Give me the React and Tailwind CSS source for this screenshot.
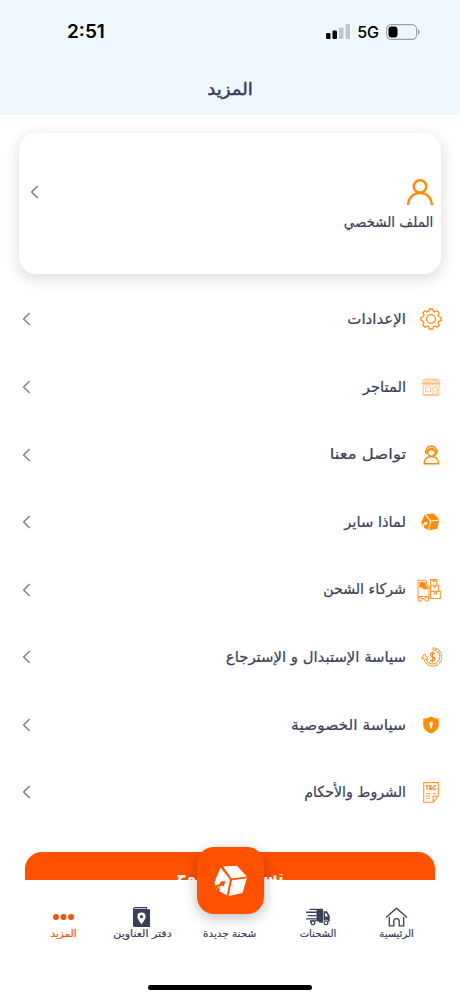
import React from 'react';

function Chevron() {
  return (
    <svg className="h-[14px] w-[9px]" viewBox="0 0 9 14" fill="none" stroke="#858585" strokeWidth="1.6">
      <path d="M7.7 1 1.7 7l6 6" />
    </svg>
  );
}

function CubeIcon({ className, arrow }) {
  return (
    <svg className={className} viewBox="0 0 34 32" fill="currentColor">
      <path d="M9 1.5 23 .8l9.8 10.7-15.3 2z" />
      <path d="M18 15.3 32.8 13.3 28.5 28 14.5 31z" />
      <path d="M6.5 2.5 16 14.5 12.8 30.3 2 24.5.5 17z" />
      <path d="M0 23.5C1.5 20.5 4 19 6.8 18.5L5.3 17l6-1.300-1.500 6-1.200-1.500C6 21.200 5.200 22.500 5 24.500l1.800-.800-3.300 4L0 26z" fill={arrow} />
      <path d="M2.2 24.8 3.6 22 6 20.6 4.2 23z" />
    </svg>
  );
}

function GearIcon() {
  return (
    <svg className="h-[22px] w-[22px]" viewBox="0 0 22 22" fill="none" stroke="#ff8c05" strokeWidth="1.3" strokeLinejoin="round">
      <path d="M9.400 1h3.200c.3 0 .4 1.900.8 2.300.5.400 1.200.7 1.700.600.5 0 1.700-1.300 2-1.100l2.100 2.100c.2.300-1.100 1.500-1.100 2s.2 1.200.6 1.700c.4.400 2.300.500 2.300.800v3.200c0 .3-1.900.4-2.300.8-.4.500-.7 1.200-.6 1.700 0 .5 1.300 1.700 1.100 2l-2.100 2.100c-.3.200-1.500-1.100-2-1.100s-1.200.2-1.700.6c-.4.400-.5 2.300-.8 2.300H9.400c-.3 0-.4-1.900-.8-2.300-.5-.4-1.200-.7-1.700-.6-.5 0-1.700 1.300-2 1.100l-2.100-2.100c-.2-.3 1.100-1.500 1.100-2s-.2-1.200-.6-1.700C2.900 13 1 12.900 1 12.600V9.400c0-.3 1.900-.4 2.300-.8.4-.5.7-1.200.6-1.700 0-.5-1.300-1.700-1.100-2l2.100-2.100c.3-.2 1.500 1.100 2 1.100s1.200-.2 1.700-.6c.4-.4.5-2.300.8-2.300z" />
      <circle cx="11" cy="11" r="4.4" />
    </svg>
  );
}

function StoreIcon() {
  return (
    <svg className="h-[18px] w-5" viewBox="0 0 20 18" fill="none" stroke="#ffb062" strokeWidth=".8">
      <path d="M3.2 1h13.6M3 1 1 5.5h18L17 1M6.5 1 5.4 5.500M10 1v4.500M13.500 1l1.100 4.500M4.700 1 3.200 5.500M8.200 1 7.600 5.500M11.800 1l.6 4.500M15.300 1l1.500 4.500" />
      <path d="M1 5.500a1.800 1.800 0 0 0 3.600 0 1.800 1.800 0 0 0 3.600 0 1.800 1.800 0 0 0 3.600 0 1.800 1.800 0 0 0 3.600 0 1.800 1.800 0 0 0 3.600 0" />
      <path d="M2.200 7.500v9.300h15.600V7.500M1.400 17.200h17.200M4.600 9.200h5.200v4.600H4.600zM12 16.800V9.200h4v7.600M13.200 12.500v1.200" />
    </svg>
  );
}

function SupportIcon() {
  return (
    <svg className="h-5 w-[17px]" viewBox="0 0 17 19" fill="none" stroke="#ff8c05" strokeWidth="1.4">
      <path d="M1.100 18.200c0-4.600 3-7.200 7.200-7.200s7.200 2.600 7.200 7.200z" />
      <path d="M3.300 5.600C3.300 2.200 5.600.700 8.300.700s5 1.500 5 4.900" />
      <circle cx="8.300" cy="6.800" r="3.900" />
      <path d="M4.800 5.200c2.400 0 3-1.600 3.800-1.600s1.400 1.600 3.400 1.600M13 8c0 1.400-1.400 2.100-3.200 2.100" />
      <path d="M2.900 4.800v3.400M13.700 4.800v3.400" strokeWidth="2" />
    </svg>
  );
}

function ForkliftIcon() {
  return (
    <svg className="relative -left-[2px] h-6 w-6" viewBox="0 0 24 24" fill="none" stroke="#ff9a2e" strokeWidth="1.1">
      <path d="M1 20.500V2.300h7.600l3.400 8v10.200H9M3.500 20.500H7M12 18.500H1.800" />
      <path d="M2.600 4.200h5.200L10.600 11H6.400L4.800 9.200H2.600z" fill="#ff8c05" stroke="#ff8c05" strokeWidth=".5" />
      <circle cx="3.200" cy="21.400" r="1.900" fill="white" />
      <circle cx="9.700" cy="21.400" r="1.900" fill="white" />
      <path d="M13.600.800v19.700h9.700v-7.100h-9M14 13.400h7.400V7.200H14M14 1.600h5.800v5.600M16.200 1.600v1.800h1.600V1.600M17 7.200v2h1.800v-2M17.300 13.400v2.200h2.200v-2.200M12.300 20.500h1.300" />
    </svg>
  );
}

function RefundIcon() {
  return (
    <svg className="h-5 w-[21px]" viewBox="0 0 21 20" fill="none" stroke="#ff9124" strokeWidth="1">
      <path d="M12 .800a9.200 9.200 0 1 1-9.200 10.800H.8L3.500 7l3.200 4.600H5A7 7 0 1 0 12 3z" />
      <path d="M13.700 6.700c-.7-.6-1.300-.8-2.200-.8-2.800 0-2.800 3.600 0 3.900 3 .3 3.200 4.300.1 4.300-1.100 0-1.900-.3-2.500-1M11.500 4.500v11" strokeWidth="1.2" />
      <path d="m14.300 3.300 1-1.500m2 4 1.600-1M19 9l1.400-.3" />
    </svg>
  );
}

function ShieldIcon() {
  return (
    <svg className="h-[18px] w-4" viewBox="0 0 16 18">
      <path d="M8 .500c2.200 1.300 4.700 2 7.700 2.100v6.200c0 4.300-3.200 7-7.700 8.800C3.500 15.800.300 13.100.300 8.800V2.600C3.300 2.500 5.800 1.800 8 .500z" fill="#ff8c05" />
      <circle cx="8" cy="7.7" r="1.9" fill="white" />
      <path d="M7.300 8.500h1.400l.3 3.900H7z" fill="white" />
    </svg>
  );
}

function TermsIcon() {
  return (
    <svg className="h-[21px] w-4" viewBox="0 0 16 21" fill="none" stroke="#ff9a2e" strokeWidth="1.1">
      <path d="M.700.600h14.600v13.300l-5.200 6.300H.700zM10.100 20v-5.700h5" />
      <path d="M3 11.700h5.500M3 14h4.500M3 16.300h4M10 11.700h3" strokeWidth=".9" />
      <text x="8" y="8" textAnchor="middle" fontSize="6" fontWeight="800" fontFamily="Open Sans, sans-serif" fill="#ff8c05" stroke="none" textLength="11" lengthAdjust="spacingAndGlyphs">T&amp;C</text>
    </svg>
  );
}

const menuItems = [
  { label: 'الإعدادات', icon: <GearIcon />, scale: '' },
  { label: 'المتاجر', icon: <StoreIcon />, scale: 'scale-x-[0.98]' },
  { label: 'تواصل معنا', icon: <SupportIcon />, scale: 'scale-x-[1.1]' },
  { label: 'لماذا ساير', icon: <CubeIcon className="relative -left-px h-[18px] w-[19px] text-[#ff8c05]" arrow="white" />, scale: 'scale-x-[0.98]' },
  { label: 'شركاء الشحن', icon: <ForkliftIcon />, scale: 'scale-x-[0.945]' },
  { label: 'سياسة الإستبدال و الإسترجاع', icon: <RefundIcon />, scale: 'scale-x-[0.99]' },
  { label: 'سياسة الخصوصية', icon: <ShieldIcon />, scale: 'scale-x-[1.03]' },
  { label: 'الشروط والأحكام', icon: <TermsIcon />, scale: 'scale-x-[0.945]' },
];

function StatusBar() {
  return (
    <div dir="ltr" className="flex h-[64px] items-center justify-between pl-[67px] pr-10 font-['Inter'] text-black">
      <span className="pt-px text-[19px] font-semibold">2:51</span>
      <div className="flex items-center">
        <svg className="h-4 w-6" viewBox="0 0 24 16">
          <rect x="0" y="9" width="4.5" height="6" rx="1.3" />
          <rect x="6.5" y="6.5" width="4.5" height="8.5" rx="1.3" />
          <rect x="13" y="3.5" width="4.5" height="11.5" rx="1.3" fill="#bfc6cd" />
          <rect x="19.5" y="0" width="4.5" height="15" rx="1.3" fill="#bfc6cd" />
        </svg>
        <span className="mx-[7px] text-[16px] font-medium">5G</span>
        <svg className="h-4 w-[34px]" viewBox="0 0 34 16">
          <rect x=".6" y=".6" width="30" height="14.8" rx="4.6" fill="none" stroke="#9ba0a5" strokeWidth="1.1" />
          <rect x="2.5" y="2.5" width="9" height="11" rx="3" />
          <path d="M32 5.500c2.200.900 2.200 4.100 0 5z" fill="#9ba0a5" />
        </svg>
      </div>
    </div>
  );
}

function BottomNav() {
  return (
    <nav className="relative h-[119px] bg-white px-[25px]">
      <div className="grid grid-cols-[77px_80px_96px_80px_77px] text-center text-[10px] leading-[14px] text-[#3b4058] [-webkit-text-stroke:0.2px]">
        <div className="flex flex-col items-center pt-[27px]">
          <svg className="h-5 w-[23px]" viewBox="0 0 23 20" fill="none" stroke="currentColor" strokeWidth="1.3">
            <path d="M1 10.500 11.500 1.200 22 10.500M4.300 10v8.800h4.500v-4.500a2.700 2.700 0 0 1 5.400 0v4.500h4.500V10" />
          </svg>
          <span className="whitespace-nowrap">الرئيسية</span>
        </div>
        <div className="flex flex-col items-center pt-[27px]">
          <svg className="h-5 w-[25px]" viewBox="0 0 25 20" fill="currentColor">
            <path d="M3.500 1.800h13.500v1.300H3.500zM0 4.500h11v1.400H0zM1.500 8h9v1.300h-9zM0 11.200h11v1.400H0z" />
            <path d="M10.500 2H17v13.800h-3.400a3 3 0 0 0-5.500 0H4v-2.500h6.500z" />
            <path d="M17.500 4.300h3.400l2.800 4.500v6h-1a3 3 0 0 0-5.200-.800zm1.600 1.600v3.600h3l-2-3.600z" fillRule="evenodd" />
            <circle cx="7" cy="15.8" r="1.9" fill="white" stroke="currentColor" strokeWidth="1.2" />
            <circle cx="20" cy="15.8" r="1.9" fill="white" stroke="currentColor" strokeWidth="1.2" />
          </svg>
          <span className="whitespace-nowrap">الشحنات</span>
        </div>
        <div className="flex flex-col items-center pt-[47px]">
          <span className="scale-x-[1.04] whitespace-nowrap">شحنة جديدة</span>
        </div>
        <div className="flex flex-col items-center pt-[27px]">
          <svg className="relative left-[-1px] h-5 w-[17px]" viewBox="0 0 17 20">
            <path d="M2 0h12v2.200h3V20H1.500A1.500 1.500 0 0 1 0 18.500V2Q0 0 2 0" fill="currentColor" />
            <path d="M1.500 1.500h11.500" stroke="white" strokeWidth=".7" />
            <path d="M8.500 5.500a4.100 4.100 0 0 1 4.100 4.100c0 3-4.100 7.700-4.100 7.700s-4.100-4.700-4.100-7.700a4.100 4.100 0 0 1 4.100-4.100" fill="white" />
            <circle cx="8.5" cy="9.7" r="1.6" fill="currentColor" />
          </svg>
          <span className="scale-x-[1.1] whitespace-nowrap">دفتر العناوين</span>
        </div>
        <div className="flex flex-col items-center pt-[27px] text-[#ff5100]">
          <svg className="h-5 w-[21px]" viewBox="0 0 21 20" fill="currentColor">
            <circle cx="3" cy="10" r="2.9" />
            <circle cx="10.5" cy="10" r="2.9" />
            <circle cx="18" cy="10" r="2.9" />
          </svg>
          <span className="scale-x-[1.04] whitespace-nowrap">المزيد</span>
        </div>
      </div>
      <button
        type="button"
        className="absolute left-[197px] -top-[33px] flex h-[67px] w-[67px] items-center justify-center rounded-[17px] bg-[#ff5100] text-white shadow-[0_4px_14px_rgba(0,0,0,0.25)]"
      >
        <CubeIcon className="h-[32px] w-[34px]" arrow="#ff5100" />
      </button>
      <div className="absolute bottom-[9px] left-[148px] h-[5px] w-[164px] rounded-full bg-black" />
    </nav>
  );
}

export default function App() {
  return (
    <div dir="rtl" className="flex h-[999px] w-[460px] flex-col overflow-hidden bg-white font-['DejaVu_Sans',sans-serif] text-[#3b4058]">
      <header className="h-[115px] bg-[#eff7ff]">
        <StatusBar />
        <h1 className="flex h-[51px] scale-x-[1.07] items-center justify-center text-[17px] [-webkit-text-stroke:0.5px]">المزيد</h1>
      </header>

      <main className="h-[765px] overflow-hidden pt-[18px]">
        {/* Profile card */}
        <section className="mx-[19px] flex h-[141px] justify-between rounded-[17px] bg-white pl-[11px] pr-2 shadow-[0_4px_14px_2px_rgba(0,0,0,0.12)]">
          <div className="pt-[46px]">
            <svg className="h-[26px] w-[26px]" viewBox="0 0 26 26" fill="none" stroke="#ff8c05" strokeWidth="2.5">
              <circle cx="13" cy="7.5" r="6.3" />
              <path d="M1.200 26c0-7.200 5-12 11.800-12s11.800 4.800 11.800 12" />
            </svg>
            <p className="mt-[7px] origin-right scale-x-[0.96] text-[14px] leading-5 [-webkit-text-stroke:0.2px]">الملف الشخصي</p>
          </div>
          <div className="pt-[52px]">
            <Chevron />
          </div>
        </section>

        <ul className="mt-[11.6px] [-webkit-text-stroke:0.2px]">
          {menuItems.map((item) => (
            <li key={item.label} className="flex h-[67.57px] items-center pl-[22px] pr-[17px]">
              <span className="flex w-6 justify-center">{item.icon}</span>
              <span className={`mr-[13px] flex-1 origin-right text-[15px] ${item.scale}`}>{item.label}</span>
              <Chevron />
            </li>
          ))}
        </ul>

        <button type="button" className="mx-[25px] mt-[25.8px] block h-[56px] w-[410px] rounded-[17px] bg-[#ff5100] pb-[6px] text-[17px] font-bold text-white">
          <span className="inline-block scale-x-[0.88]">تسجيل الخروج</span>
        </button>
      </main>

      <BottomNav />
    </div>
  );
}
